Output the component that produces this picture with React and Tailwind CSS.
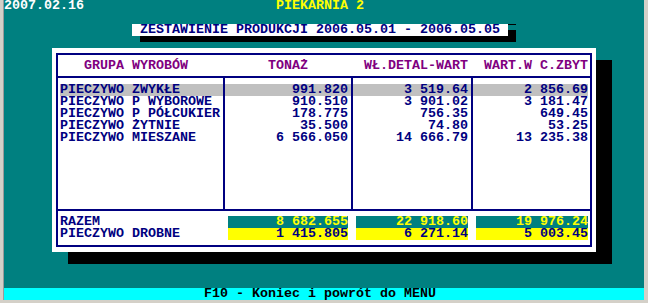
import React from 'react';

const NAVY = 'text-[#000080]';

const rows = [
  { name: 'PIECZYWO ZWYKŁE', ton: '991.820', det: '3 519.64', zbyt: '2 856.69', active: true },
  { name: 'PIECZYWO P WYBOROWE', ton: '910.510', det: '3 901.02', zbyt: '3 181.47' },
  { name: 'PIECZYWO P PÓŁCUKIER', ton: '178.775', det: '756.35', zbyt: '649.45' },
  { name: 'PIECZYWO ŻYTNIE', ton: '35.500', det: '74.80', zbyt: '53.25' },
  { name: 'PIECZYWO MIESZANE', ton: '6 566.050', det: '14 666.79', zbyt: '13 235.38' },
];

// one line of the table body, the column borders make the vertical rules
const TableRow = ({ row, h = 'h-[12px]' }) => {
  const bg = row && row.active ? 'bg-[#c0c0c0]' : '';
  return (
    <div className={`flex ${h}`}>
      <div className="w-[169px] pl-[4px] border-r-2 border-[#000080] flex">
        <div className={`flex-1 whitespace-pre ${bg}`}>{row ? row.name : ''}</div>
      </div>
      <div className={`w-[128px] pr-[3px] border-r-2 border-[#000080] text-right whitespace-pre ${bg}`}>
        {row ? row.ton : ''}
      </div>
      <div className={`w-[120px] pr-[3px] border-r-2 border-[#000080] text-right whitespace-pre ${bg}`}>
        {row ? row.det : ''}
      </div>
      <div className="w-[119px] pr-[4px] flex">
        <div className={`flex-1 text-right whitespace-pre ${bg}`}>{row ? row.zbyt : ''}</div>
      </div>
    </div>
  );
};

const TotalRow = ({ label, values, box }) => (
  <div className="flex h-[12px] whitespace-pre">
    <div className="w-[172px] pl-[4px]">{label}</div>
    <div className={`w-[120px] text-right ${box}`}>{values[0]}</div>
    <div className={`w-[112px] ml-[8px] text-right ${box}`}>{values[1]}</div>
    <div className={`w-[112px] ml-[8px] text-right ${box}`}>{values[2]}</div>
  </div>
);

const App = () => {
  const empty = [...Array(5)];

  return (
    <div className="w-[648px] h-[303px] bg-[#d4d0c8] pl-[4px] font-['Liberation_Mono',monospace] font-bold text-[13.333px] leading-[12px]">
      <div className="w-[640px] h-[300px] bg-[#008080] flex flex-col shadow-[-1px_0_0_#9a9a9a]">
        {/* top line */}
        <div className="h-[12px] flex whitespace-pre">
          <div className="w-[272px] text-white">2007.02.16</div>
          <div className="text-[#ffff00]">PIEKARNIA 2</div>
        </div>
        <div className="h-[12px]" />

        {/* title */}
        <div className="h-[12px] flex">
          <div className={`relative ml-[128px] w-[376px] pl-[8px] bg-white ${NAVY} whitespace-pre shadow-[8px_6px_0_#000]`}>
            ZESTAWIENIE PRODUKCJI 2006.05.01 - 2006.05.05
            <span className="absolute top-0 -right-[8px] w-[8px] h-px bg-black" />
          </div>
        </div>
        <div className="h-[12px]" />

        {/* main window */}
        <div className="h-[204px] flex">
          <div className={`relative ml-[48px] w-[544px] h-[204px] bg-white pt-[12px] ${NAVY} shadow-[16px_12px_0_#000]`}>
            <div className="flex h-[12px] mx-[4px] text-[#800080] whitespace-pre">
              <div className="w-[169px] pl-[28px]">GRUPA WYROBÓW</div>
              <div className="w-[128px] pl-[43px]">TONAŻ</div>
              <div className="w-[120px] pl-[11px]">WŁ.DETAL-WART</div>
              <div className="w-[119px] pl-[11px]">WART.W C.ZBYT</div>
            </div>

            <div className="mx-[4px] mt-[4px] border-y-2 border-[#000080]">
              <TableRow h="h-[6px]" />
              {rows.map((r) => (
                <TableRow key={r.name} row={r} />
              ))}
              {empty.map((_, i) => (
                <TableRow key={i} />
              ))}
              <TableRow h="h-[5px]" />
            </div>

            <div className="mx-[4px] mt-[5px]">
              <TotalRow
                label="RAZEM"
                values={['8 682.655', '22 918.60', '19 976.24']}
                box="bg-[#008080] text-[#ffff00]"
              />
              <TotalRow
                label="PIECZYWO DROBNE"
                values={['1 415.805', '6 271.14', '5 003.45']}
                box="bg-[#ffff00] text-[#000080]"
              />
            </div>

            <div className="absolute left-[4px] top-[5px] w-[536px] h-[194px] border-2 border-[#000080] pointer-events-none" />
          </div>
        </div>

        <div className="h-[36px]" />

        {/* status bar */}
        <div className="h-[12px] bg-[#00ffff] text-black pl-[200px] whitespace-pre">F10 - Koniec i powrót do MENU</div>
      </div>
    </div>
  );
};

export default App;
